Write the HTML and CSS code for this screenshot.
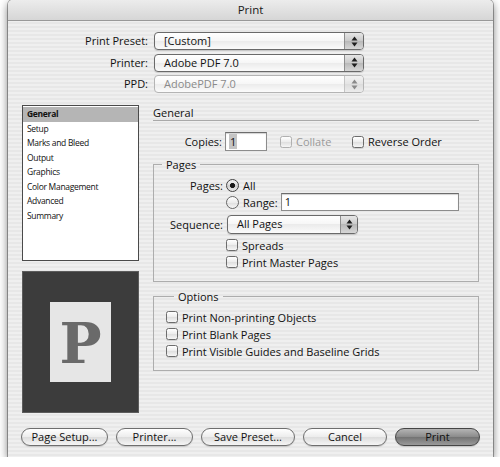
FILE: index.html
```html
<!DOCTYPE html>
<html>
<head>
<meta charset="utf-8">
<title>Print</title>
<link rel="stylesheet" href="styles.css">
</head>
<body>
<div class="window">
  <div class="titlebar">Print</div>
  <div class="presets">
    <span class="plabel">Print Preset:</span>
    <div class="popup"><span class="ptext">[Custom]</span><span class="arrows"><svg width="7" height="11" viewBox="0 0 7 11"><polygon points="0.5,4.5 3.5,0.5 6.5,4.5"/><polygon points="0.5,6.5 3.5,10.5 6.5,6.5"/></svg></span></div>
    <span class="plabel">Printer:</span>
    <div class="popup"><span class="ptext">Adobe PDF 7.0</span><span class="arrows"><svg width="7" height="11" viewBox="0 0 7 11"><polygon points="0.5,4.5 3.5,0.5 6.5,4.5"/><polygon points="0.5,6.5 3.5,10.5 6.5,6.5"/></svg></span></div>
    <span class="plabel">PPD:</span>
    <div class="popup disabled"><span class="ptext">AdobePDF 7.0</span><span class="arrows"><svg width="7" height="11" viewBox="0 0 7 11"><polygon points="0.5,4.5 3.5,0.5 6.5,4.5"/><polygon points="0.5,6.5 3.5,10.5 6.5,6.5"/></svg></span></div>
  </div>

  <div class="main">
    <div class="sidebar">
      <ul class="list">
        <li class="sel">General</li>
        <li>Setup</li>
        <li>Marks and Bleed</li>
        <li>Output</li>
        <li>Graphics</li>
        <li>Color Management</li>
        <li>Advanced</li>
        <li>Summary</li>
      </ul>
      <div class="preview"><div class="paper">P</div></div>
    </div>

    <div class="panel">
      <div class="heading">General</div>
      <div class="copies-row">
        <span class="rlabel">Copies:</span>
        <span class="text-input copies"><span class="hl">1</span></span>
        <span class="check-item collate"><span class="box disabled"></span><span class="dim">Collate</span></span>
        <span class="check-item"><span class="box"></span><span>Reverse Order</span></span>
      </div>

      <fieldset class="group pages">
        <legend>Pages</legend>
        <div class="grow r16">
          <span class="rlabel">Pages:</span>
          <span class="check-item"><span class="radio on"></span><span>All</span></span>
        </div>
        <div class="grow r18">
          <span class="rlabel"></span>
          <span class="check-item"><span class="radio"></span><span>Range:</span></span>
          <span class="text-input range">1</span>
        </div>
        <div class="grow r19 seq">
          <span class="rlabel">Sequence:</span>
          <div class="popup small"><span class="ptext">All Pages</span><span class="arrows"><svg width="7" height="11" viewBox="0 0 7 11"><polygon points="0.5,4.5 3.5,0.5 6.5,4.5"/><polygon points="0.5,6.5 3.5,10.5 6.5,6.5"/></svg></span></div>
        </div>
        <div class="grow r16 spreads">
          <span class="rlabel"></span>
          <span class="check-item"><span class="box"></span><span>Spreads</span></span>
        </div>
        <div class="grow r16 master">
          <span class="rlabel"></span>
          <span class="check-item"><span class="box"></span><span>Print Master Pages</span></span>
        </div>
      </fieldset>

      <fieldset class="group options">
        <legend>Options</legend>
        <div class="orow"><span class="check-item"><span class="box"></span><span>Print Non-printing Objects</span></span></div>
        <div class="orow"><span class="check-item"><span class="box"></span><span>Print Blank Pages</span></span></div>
        <div class="orow"><span class="check-item"><span class="box"></span><span>Print Visible Guides and Baseline Grids</span></span></div>
      </fieldset>
    </div>
  </div>

  <div class="buttons">
    <span class="btn w87">Page Setup...</span>
    <span class="btn w77">Printer...</span>
    <span class="btn w94">Save Preset...</span>
    <span class="btn w84">Cancel</span>
    <span class="btn w85 default">Print</span>
  </div>
</div>
</body>
</html>
```

FILE: styles.css
```css
* { box-sizing: border-box; }
html, body { margin: 0; padding: 0; background: #ffffff; }
body {
  font-family: "Open Sans", "DejaVu Sans", sans-serif;
  font-size: 11px;
  color: #111;
}
.window {
  margin-left: 8px;
  width: 485px;
  height: 457px;
  border-radius: 5px 5px 0 0;
  background: repeating-linear-gradient(to bottom, #efefef 0 2px, #e7e7e7 2px 4px);
  box-shadow: 0 0 0 1px rgba(0,0,0,0.3), 0 3px 10px rgba(0,0,0,0.55);
  overflow: hidden;
}
.titlebar {
  height: 21px;
  line-height: 20px;
  text-align: center;
  border-bottom: 1px solid #999;
  background: linear-gradient(#ececec, #d6d6d6);
  font-size: 11.5px;
  color: #1a1a1a;
}

/* presets */
.presets {
  display: grid;
  grid-template-columns: 140px 210px;
  column-gap: 6px;
  row-gap: 3.5px;
  padding-top: 11px;
  align-items: center;
}
.plabel { text-align: right; line-height: 18px; }
.popup {
  display: flex;
  height: 18px;
  border: 1px solid #6a6a6a;
  border-radius: 4px;
  background: linear-gradient(#ffffff, #f6f6f6 50%, #ebebeb 50%, #fbfbfb);
  overflow: hidden;
  box-shadow: 0 1px 1px rgba(0,0,0,0.15);
}
.popup .ptext { flex: 1; padding-left: 9px; line-height: 16px; white-space: nowrap; }
.popup .arrows {
  width: 19px;
  border-left: 1px solid #8e8e8e;
  background: linear-gradient(#e6e6e6, #cacaca 50%, #b8b8b8 50%, #d6d6d6);
  display: flex;
  align-items: center;
  justify-content: center;
}
.popup .arrows svg { fill: #1e1e1e; }
.popup.disabled { border-color: #b4b4b4; color: #8a8a8a; box-shadow: none; }
.popup.disabled .arrows { background: linear-gradient(#f2f2f2, #e4e4e4 50%, #dcdcdc 50%, #ececec); border-left-color: #c4c4c4; }
.popup.disabled .arrows svg { fill: #8a8a8a; }
.popup.small { width: 131px; height: 19px; margin-left: 1px; }
.popup.small .arrows { width: 17px; }

/* main */
.main {
  display: flex;
  gap: 14px;
  margin-top: 12px;
  padding-left: 14px;
}
.sidebar {
  width: 117px;
  display: flex;
  flex-direction: column;
  gap: 10px;
}
.list {
  height: 156px;
  margin: 0;
  padding: 1px 0 0;
  list-style: none;
  background: #fff;
  border: 1px solid #4a4a4a;
  font-size: 8.5px;
  letter-spacing: -0.3px;
}
.list li { line-height: 14.5px; padding-left: 4px; white-space: nowrap; }
.list li.sel { background: #b5b5b5; font-weight: 700; }
.preview {
  height: 142px;
  background: #3c3c3c;
  border: 1px solid #5c5c5c;
  padding-top: 30px;
  display: flex;
  justify-content: center;
  align-items: flex-start;
}
.paper {
  width: 61px;
  height: 80px;
  background: #e6e6e6;
  display: flex;
  align-items: center;
  justify-content: center;
  font-family: "DejaVu Serif", "Liberation Serif", serif;
  font-weight: 700;
  font-size: 56px;
  line-height: 1;
  color: #6a6a6a;
  padding-top: 2px;
}

.panel { width: 326px; }
.heading {
  line-height: 15px;
  border-bottom: 1px solid #a9a9a9;
}
.copies-row {
  display: flex;
  align-items: center;
  margin-top: 11px;
  height: 19px;
}
.rlabel {
  width: 72px;
  flex: none;
  text-align: right;
  padding-right: 3px;
}
.text-input {
  display: inline-block;
  height: 19px;
  background: #fff;
  border: 1px solid #8c8c8c;
  border-top-color: #6c6c6c;
  box-shadow: inset 0 1px 1px rgba(0,0,0,0.18);
  padding-left: 3px;
  line-height: 17px;
}
.text-input.copies { width: 42px; }
.text-input .hl { background: #c4c4c4; padding: 0 1px; }
.text-input.range { width: 178px; height: 18px; line-height: 16px; margin-left: 3px; }

.check-item { display: inline-flex; align-items: center; gap: 4px; white-space: nowrap; }
.collate { width: 72px; margin-left: 13px; }
.dim { color: #9a9a9a; }
.box {
  width: 12px;
  height: 12px;
  flex: none;
  border: 1px solid #6c6c6c;
  border-radius: 2.5px;
  background: linear-gradient(#ffffff, #ececec 50%, #dedede 50%, #f6f6f6);
  box-shadow: 0 1px 0.5px rgba(0,0,0,0.12);
}
.box.disabled { border-color: #b0b0b0; box-shadow: none; }
.radio {
  width: 13px;
  height: 13px;
  flex: none;
  border: 1px solid #666;
  border-radius: 50%;
  background: linear-gradient(#ffffff, #ececec 50%, #dedede 50%, #f6f6f6);
}
.radio.on {
  border-color: #444;
  background: radial-gradient(circle, #1a1a1a 0 2.2px, transparent 2.9px), linear-gradient(#f4f4f4, #dcdcdc 50%, #cecece 50%, #eaeaea);
}

/* group boxes */
.group {
  margin: 6px 0 0;
  border: 1px solid #adadad;
  min-width: 0;
}
.group legend {
  margin-left: 8px;
  padding: 0 4px;
  line-height: 15px;
}
.pages { padding: 5px 0 11px 0; }
.grow { display: flex; align-items: center; }
.r16 { height: 16px; }
.r18 { height: 18px; }
.r19 { height: 19px; }
.seq { margin-top: 4px; }
.spreads { margin-top: 3px; }
.master { margin-top: 1px; }

.options { margin-top: 6.5px; padding: 5px 0 10px 12px; }
.orow { height: 17px; display: flex; align-items: center; }

/* buttons */
.buttons {
  display: flex;
  gap: 8px;
  margin-top: 15px;
  padding-left: 13px;
}
.btn {
  height: 18px;
  border: 1px solid #6e6e6e;
  border-radius: 9px;
  background: linear-gradient(#ffffff, #ececec 50%, #dcdcdc 50%, #f5f5f5);
  text-align: center;
  line-height: 16px;
  box-shadow: 0 1px 1px rgba(0,0,0,0.15);
}
.btn.default {
  border-color: #454545;
  background: linear-gradient(#b4b4b4, #8a8a8a 50%, #727272 50%, #9a9a9a);
}
.w87 { width: 87px; }
.w77 { width: 77px; }
.w94 { width: 94px; }
.w84 { width: 84px; }
.w85 { width: 85px; }
```
